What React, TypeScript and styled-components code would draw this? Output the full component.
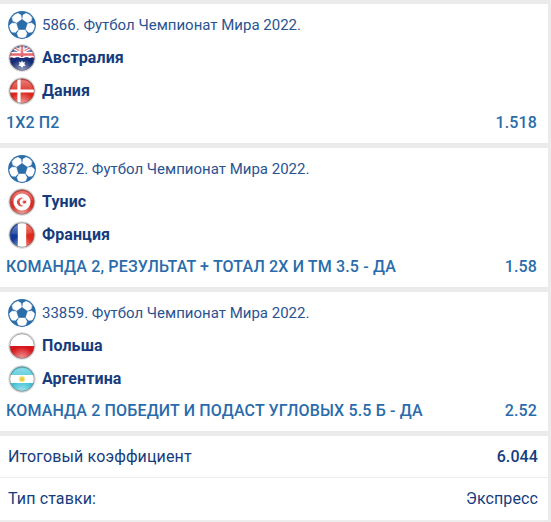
import React from "react";
import styled, { createGlobalStyle } from "styled-components";

const GlobalStyle = createGlobalStyle`
  * { box-sizing: border-box; }
  body {
    margin: 0;
    background: #ebebeb;
    font-family: Roboto, "Liberation Sans", sans-serif;
    color: #153c7d;
    overflow: hidden;
  }
`;

const Page = styled.main`
  width: 548px;
  height: 522px;
  padding-top: 4px;
  display: flex;
  flex-direction: column;
  gap: 5px;
  overflow: hidden;
`;

const Card = styled.section`
  height: 139px;
  flex: none;
  background: #fff;
  padding: 5px 11px 0 6px;
`;

const Line = styled.div`
  display: flex;
  align-items: center;
  height: 33px;
  gap: 6px;
  padding-left: 2px;
`;

const Heading = styled(Line)`
  height: 32px;
`;

const Title = styled.span`
  font-size: 15px;
  line-height: 20px;
  color: #2a5391;
  white-space: nowrap;
`;

const Team = styled.span`
  font-size: 16px;
  line-height: 20px;
  font-weight: 700;
  letter-spacing: 0.1px;
  color: #153c7d;
`;

const Outcome = styled.div`
  display: flex;
  justify-content: space-between;
  font-size: 16px;
  line-height: 20px;
  margin-top: 6px;
  font-weight: 500;
  letter-spacing: 0.15px;
  color: #2a6cab;
  white-space: nowrap;
`;

const Summary = styled.section`
  flex: none;
  background: #fff;
`;

const SummaryRow = styled.div`
  display: flex;
  justify-content: space-between;
  align-items: center;
  height: 42px;
  padding: 0 10px 0 8px;
  border-bottom: 1px solid #eee;
  font-size: 16px;
  line-height: 20px;
  &:last-child {
    height: 43px;
    padding-bottom: 1px;
  }
`;

const Label = styled.span`
  letter-spacing: 0.13px;
`;

const Value = styled.span<{ $strong?: boolean }>`
  font-weight: ${(p) => (p.$strong ? 500 : 400)};
  letter-spacing: 0.1px;
`;

const Icon = styled.svg`
  width: 28px;
  height: 28px;
  flex: none;
  display: block;
`;

const Ball = () => (
  <Icon viewBox="-14 -14 28 28">
    <circle r="13.9" fill="#2b6da9" />
    {[0, 72, 144, 216, 288].map((a) => (
      <path
        key={a}
        transform={`rotate(${a})`}
        d="M-3.1 5L3.1 5L5 8.6L3.6 11.9Q0 13.4 -3.6 11.9L-5 8.6Z"
        fill="#fff"
        stroke="#fff"
        strokeWidth="0.4"
        strokeLinejoin="round"
      />
    ))}
  </Icon>
);

type Country = "au" | "dk" | "tn" | "fr" | "pl" | "ar";

const flags: Record<Country, React.ReactNode> = {
  au: (
    <>
      <rect width="28" height="28" fill="#142c78" />
      <rect width="28" height="14" fill="#46579c" />
      <path d="M1 1L27 15M27 1L1 15" stroke="#fff" strokeWidth="3.4" />
      <path d="M1 1L27 15M27 1L1 15" stroke="#df4550" strokeWidth="1.3" />
      <path d="M14 0V14M0 10.5H28" stroke="#fff" strokeWidth="5" />
      <path d="M14 0V13M0 10.5H28" stroke="#df4550" strokeWidth="2.6" />
      <rect y="14" width="28" height="14" fill="#142c78" />
      <path d="M14 16.6L15 18.5L17.2 18.1L16.3 20.1L17.7 21.7L15.5 21.9L14 23.8L12.5 21.9L10.3 21.7L11.7 20.1L10.8 18.1L13 18.5Z" fill="#fff" />
    </>
  ),
  dk: (
    <>
      <rect width="28" height="28" fill="#d9261c" />
      <path d="M11 0V28M0 14H28" stroke="#fff" strokeWidth="3.2" />
    </>
  ),
  tn: (
    <>
      <rect width="28" height="28" fill="#d92e24" />
      <circle cx="14" cy="14" r="8.6" fill="#fff" />
      <g transform="translate(14 14) scale(0.95) translate(-13.6 -14)">
        <path d="M15.6 10.2A4.6 4.6 0 1 0 15.6 17.8A3.85 3.85 0 1 1 15.6 10.2Z" fill="#dc3d35" />
        <path d="M13.4 14L15.2 13.3L15.3 11.4L16.6 12.9L18.6 12.4L17.6 14L18.6 15.7L16.6 15.1L15.3 16.6L15.2 14.7Z" fill="#dc3d35" />
      </g>
    </>
  ),
  fr: (
    <>
      <rect width="28" height="28" fill="#fff" />
      <rect width="9.8" height="28" fill="#11389c" />
      <rect x="18.2" width="10" height="28" fill="#df2a1d" />
    </>
  ),
  pl: (
    <>
      <rect width="28" height="14" fill="#fff" />
      <rect y="14" width="28" height="14" fill="#d8171d" />
    </>
  ),
  ar: (
    <>
      <rect width="28" height="28" fill="#fff" />
      <rect width="28" height="10" fill="#43c3d6" />
      <rect y="18" width="28" height="10" fill="#38bfd4" />
      <circle cx="14" cy="14" r="3.2" fill="#f8e89c" />
      <circle cx="14" cy="14" r="2.3" fill="#eecb38" />
    </>
  ),
};

const Flag = ({ code }: { code: Country }) => (
  <Icon viewBox="0 0 28 28">
    <defs>
      <clipPath id={`clip-${code}`}>
        <circle cx="14" cy="14" r="12.4" />
      </clipPath>
      <linearGradient id={`gloss-${code}`} x1="0" y1="0" x2="0" y2="1">
        <stop offset="0" stopColor="#fff" stopOpacity="0.4" />
        <stop offset="1" stopColor="#fff" stopOpacity="0.1" />
      </linearGradient>
      <radialGradient id={`glow-${code}`} cx="0.5" cy="1" r="0.45">
        <stop offset="0" stopColor="#fff" stopOpacity="0.6" />
        <stop offset="1" stopColor="#fff" stopOpacity="0" />
      </radialGradient>
    </defs>
    <g clipPath={`url(#clip-${code})`}>
      {flags[code]}
      <path d="M3 13Q14 15 25 12Q23 3 14 3Q5 3 3 13Z" fill={`url(#gloss-${code})`} />
      <rect width="28" height="27" fill={`url(#glow-${code})`} />
    </g>
    <circle cx="14" cy="14" r="13" fill="none" stroke="#aaa" strokeOpacity="0.45" strokeWidth="1.3" />
    <circle cx="14" cy="14" r="12.2" fill="none" stroke="#777" strokeOpacity="0.6" strokeWidth="1" />
  </Icon>
);

interface Bet {
  id: number;
  teams: { name: string; code: Country }[];
  outcome: string;
  odds: string;
}

const bets: Bet[] = [
  {
    id: 5866,
    teams: [{ name: "Австралия", code: "au" }, { name: "Дания", code: "dk" }],
    outcome: "1X2 П2",
    odds: "1.518",
  },
  {
    id: 33872,
    teams: [{ name: "Тунис", code: "tn" }, { name: "Франция", code: "fr" }],
    outcome: "КОМАНДА 2, РЕЗУЛЬТАТ + ТОТАЛ 2Х И ТМ 3.5 - ДА",
    odds: "1.58",
  },
  {
    id: 33859,
    teams: [{ name: "Польша", code: "pl" }, { name: "Аргентина", code: "ar" }],
    outcome: "КОМАНДА 2 ПОБЕДИТ И ПОДАСТ УГЛОВЫХ 5.5 Б - ДА",
    odds: "2.52",
  },
];

export default function App() {
  return (
    <>
      <GlobalStyle />
      <Page>
        {bets.map((bet) => (
          <Card key={bet.id}>
            <Heading>
              <Ball />
              <Title>{bet.id}. Футбол Чемпионат Мира 2022.</Title>
            </Heading>
            {bet.teams.map((team) => (
              <Line key={team.code}>
                <Flag code={team.code} />
                <Team>{team.name}</Team>
              </Line>
            ))}
            <Outcome>
              <span>{bet.outcome}</span>
              <span>{bet.odds}</span>
            </Outcome>
          </Card>
        ))}
        <Summary>
          <SummaryRow>
            <Label>Итоговый коэффициент</Label>
            <Value $strong>6.044</Value>
          </SummaryRow>
          <SummaryRow>
            <Label>Тип ставки:</Label>
            <Value>Экспресс</Value>
          </SummaryRow>
        </Summary>
      </Page>
    </>
  );
}
